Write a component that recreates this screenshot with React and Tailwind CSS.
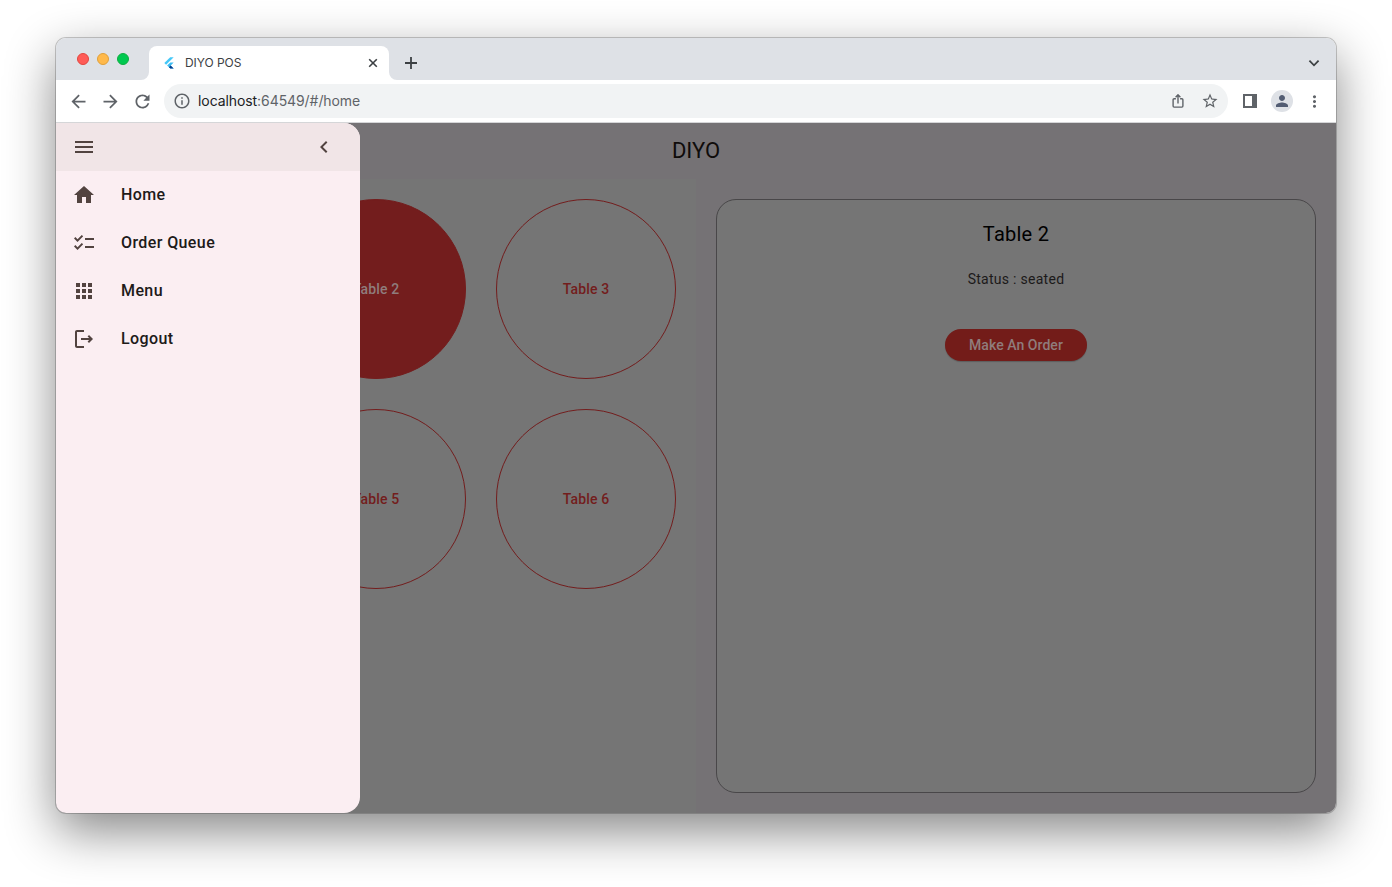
import React from "react";

const ICONS = {
  menu: "M3 18h18v-2H3v2zm0-5h18v-2H3v2zm0-7v2h18V6H3z",
  chevronLeft: "M15.41 7.41L14 6l-6 6 6 6 1.41-1.41L10.83 12z",
  home: "M10 20v-6h4v6h5v-8h3L12 3 2 12h3v8z",
  checklist:
    "M22 7h-9v2h9V7zm0 8h-9v2h9v-2zM5.54 11L2 7.46l1.41-1.41 2.12 2.12 4.24-4.24 1.41 1.41L5.54 11zm0 8L2 15.46l1.41-1.41 2.12 2.12 4.24-4.24 1.41 1.41L5.54 19z",
  apps: "M4 8h4V4H4v4zm6 12h4v-4h-4v4zm-6 0h4v-4H4v4zm0-6h4v-4H4v4zm6 0h4v-4h-4v4zm6-10v4h4V4h-4zm-6 4h4V4h-4v4zm6 6h4v-4h-4v4zm0 6h4v-4h-4v4z",
  logout:
    "M17 8l-1.41 1.41L17.17 11H9v2h8.17l-1.58 1.58L17 16l4-4-4-4zM5 5h7V3H5c-1.1 0-2 .9-2 2v14c0 1.1.9 2 2 2h7v-2H5V5z",
  back: "M20 11H7.83l5.59-5.59L12 4l-8 8 8 8 1.41-1.41L7.83 13H20v-2z",
  forward: "M12 4l-1.41 1.41L16.17 11H4v2h12.17l-5.58 5.59L12 20l8-8z",
  reload:
    "M17.65 6.35C16.2 4.9 14.21 4 12 4c-4.42 0-7.99 3.58-7.99 8s3.57 8 7.99 8c3.73 0 6.84-2.55 7.73-6h-2.08c-.82 2.33-3.04 4-5.65 4-3.31 0-6-2.69-6-6s2.69-6 6-6c1.66 0 3.14.69 4.22 1.78L13 11h7V4l-2.35 2.35z",
  info: "M11 7h2v2h-2zm0 4h2v6h-2zm1-9C6.48 2 2 6.48 2 12s4.48 10 10 10 10-4.48 10-10S17.52 2 12 2zm0 18c-4.41 0-8-3.59-8-8s3.59-8 8-8 8 3.59 8 8-3.59 8-8 8z",
  star: "M22 9.24l-7.19-.62L12 2 9.19 8.63 2 9.24l5.46 4.73L5.82 21 12 17.27 18.18 21l-1.63-7.03L22 9.24zM12 15.4l-3.76 2.27 1-4.28-3.32-2.88 4.38-.38L12 6.1l1.71 4.04 4.38.38-3.32 2.88 1 4.28L12 15.4z",
  person:
    "M12 12c2.21 0 4-1.79 4-4s-1.79-4-4-4-4 1.79-4 4 1.79 4 4 4zm0 2c-2.67 0-8 1.34-8 4v2h16v-2c0-2.66-5.33-4-8-4z",
  more: "M12 8c1.1 0 2-.9 2-2s-.9-2-2-2-2 .9-2 2 .9 2 2 2zm0 2c-1.1 0-2 .9-2 2s.9 2 2 2 2-.9 2-2-.9-2-2-2zm0 6c-1.1 0-2 .9-2 2s.9 2 2 2 2-.9 2-2-.9-2-2-2z",
};

function Icon({ name, className }) {
  return (
    <svg viewBox="0 0 24 24" fill="currentColor" className={`shrink-0 ${className}`}>
      <path d={ICONS[name]} />
    </svg>
  );
}

function FlutterLogo() {
  return (
    <svg viewBox="0 0 16 16" className="size-4 shrink-0">
      <path d="M9.2 2.2h3.5L5.1 9.8 3.3 8.1z" fill="#45c8f8" />
      <path d="M9.3 7.4h3.4l-3 3 3 3.2H9.3L6.1 10.5z" fill="#3dbdf2" />
      <path d="M7.9 12.2l1.7-1.7 3.1 3.1H9.3z" fill="#083a8a" />
    </svg>
  );
}

function TabStrip() {
  return (
    <div className="flex h-[42px] bg-[#dee1e6]">
      <div className="flex gap-2 pt-[15px] pl-[21px]">
        <span className="size-3 rounded-full border border-[#e2463f] bg-[#ff5b57]" />
        <span className="size-3 rounded-full border border-[#e0a03a] bg-[#ffb94b]" />
        <span className="size-3 rounded-full border border-[#0fae41] bg-[#00c950]" />
      </div>
      <div className="ml-[12px] flex items-end pt-2">
        <svg viewBox="0 0 8 8" className="size-2">
          <path d="M8 0v8H0a8 8 0 0 0 8-8z" fill="#fff" />
        </svg>
        <div className="flex h-[34px] w-[240px] items-center rounded-t-lg bg-white pr-[10px] pl-3">
          <FlutterLogo />
          <span className="ml-2 flex-1 font-['Inter'] text-[12px] tracking-[-0.05px] text-[#3c4043]">
            DIYO POS
          </span>
          <svg viewBox="0 0 12 12" className="size-3" fill="none" stroke="#3c4043" strokeWidth="1.6">
            <path d="M2.2 2.2l7.6 7.6M9.8 2.2l-7.6 7.6" />
          </svg>
        </div>
        <svg viewBox="0 0 8 8" className="size-2">
          <path d="M0 0v8h8a8 8 0 0 1-8-8z" fill="#fff" />
        </svg>
        <svg viewBox="0 0 14 14" className="mb-[10px] ml-[7px] size-[14px]" fill="none" stroke="#3c4043" strokeWidth="1.8">
          <path d="M7 1v12M1 7h12" />
        </svg>
      </div>
      <svg
        viewBox="0 0 12 12"
        className="mt-[19px] mr-4 ml-auto size-3"
        fill="none"
        stroke="#3c4043"
        strokeWidth="1.8"
      >
        <path d="M1.4 3.7 6 8.3l4.6-4.6" />
      </svg>
    </div>
  );
}

function Toolbar() {
  return (
    <div className="flex h-[43px] items-center border-b border-[#d5d6d8] bg-white text-[#5f6368]">
      <div className="flex gap-[11px] pl-[11.5px]">
        <Icon name="back" className="size-[21px]" />
        <Icon name="forward" className="size-[21px]" />
        <Icon name="reload" className="size-[21px]" />
      </div>
      <div className="ml-[11.5px] flex h-[34px] w-[1064px] items-center rounded-full bg-[#f1f3f4] pr-[9px] pl-[9px]">
        <Icon name="info" className="size-[18px]" />
        <span className="ml-[7px] flex-1 pb-0.5 font-['Inter'] text-[14px] tracking-[-0.08px] text-[#5f6368]">
          <span className="text-[#202124]">localhost</span>:64549/#/home
        </span>
        <svg viewBox="0 0 16 16" className="size-4" fill="none" stroke="currentColor" strokeWidth="1.4">
          <path
            d="M5.9 5.7H4.1c-.6 0-1 .4-1 1v6.4c0 .6.4 1 1 1h7.8c.6 0 1-.4 1-1V6.7c0-.6-.4-1-1-1h-1.8M8 10.4V2M5.6 4.2 8 1.8l2.4 2.4"
            strokeLinejoin="round"
          />
        </svg>
        <Icon name="star" className="ml-[15px] size-[18px]" />
      </div>
      <svg viewBox="0 0 14 14" className="ml-[15px] size-[14px]" fill="none">
        <path d="M1 1h12v12H1z" stroke="#5f6368" strokeWidth="2" />
        <path d="M9 1h4v12H9z" fill="#5f6368" />
      </svg>
      <div className="ml-[14px] flex size-[22px] items-center justify-center rounded-full bg-[#dee1e6]">
        <Icon name="person" className="size-[18px] text-[#535d73]" />
      </div>
      <Icon name="more" className="ml-[12px] size-[19px]" />
    </div>
  );
}

function DrawerItem({ icon, label }) {
  return (
    <div className="flex h-12 items-center pl-4 text-[#524340]">
      <Icon name={icon} className="size-6" />
      <span className="ml-[25px] text-[16px] font-medium tracking-[0.4px] text-[#201a19]">{label}</span>
    </div>
  );
}

function Drawer() {
  return (
    <div className="absolute inset-y-0 left-0 w-[304px] overflow-hidden rounded-r-2xl bg-[#fbeef2]">
      <div className="flex h-12 items-center justify-between bg-[#f1e5e7] pr-6 pl-4 text-[#524340]">
        <Icon name="menu" className="size-6" />
        <Icon name="chevronLeft" className="size-6" />
      </div>
      <DrawerItem icon="home" label="Home" />
      <DrawerItem icon="checklist" label="Order Queue" />
      <DrawerItem icon="apps" label="Menu" />
      <DrawerItem icon="logout" label="Logout" />
    </div>
  );
}

function TableButton({ label, filled }) {
  return (
    <div
      className={`flex size-[180px] items-center justify-center rounded-full border border-[#731d1d] text-[14px] font-medium tracking-[0.15px] ${
        filled ? "bg-[#731d1d] text-[#8f7c7c]" : "text-[#731d1d]"
      }`}
    >
      {label}
    </div>
  );
}

export default function App() {
  return (
    <div className="h-[887px] w-[1392px] overflow-hidden bg-white px-14 pt-[38px] font-['Roboto',sans-serif]">
      <div className="flex h-[775px] w-[1280px] flex-col rounded-[10px] shadow-[0_0_0_1px_rgba(0,0,0,0.2),0_18px_50px_rgba(0,0,0,0.48)]">
        <div className="flex flex-1 flex-col overflow-hidden rounded-[10px]">
          <TabStrip />
          <Toolbar />
          <div className="relative flex flex-1 flex-col bg-[#757275]">
            <div className="flex h-14 items-center justify-center pb-0.5 text-[22px] text-[#0f0c0b]">DIYO</div>
            <div className="flex flex-1">
              <div className="w-[640px] bg-[#757575] p-5">
                <div className="ml-[210px] grid grid-cols-[180px_180px] gap-[30px]">
                  <TableButton label="Table 2" filled />
                  <TableButton label="Table 3" />
                  <TableButton label="Table 5" />
                  <TableButton label="Table 6" />
                </div>
              </div>
              <div className="flex flex-1 p-5">
                <div className="flex flex-1 flex-col items-center rounded-[20px] border border-[#494749] bg-[#757575]">
                  <div className="mt-5 text-[20px] leading-7 tracking-[0.25px] text-black">Table 2</div>
                  <div className="mt-[21px] text-[14px] leading-5 tracking-[0.28px] text-[#1c1a1a]">
                    Status : seated
                  </div>
                  <div className="mt-10 flex h-8 w-[142px] items-center justify-center rounded-full bg-[#731c19] text-[14px] font-medium tracking-[0.05px] text-[#8f7c7c] shadow-[0_1px_1px_rgba(0,0,0,0.2)]">
                    Make An Order
                  </div>
                </div>
              </div>
            </div>
            <Drawer />
          </div>
        </div>
      </div>
    </div>
  );
}
